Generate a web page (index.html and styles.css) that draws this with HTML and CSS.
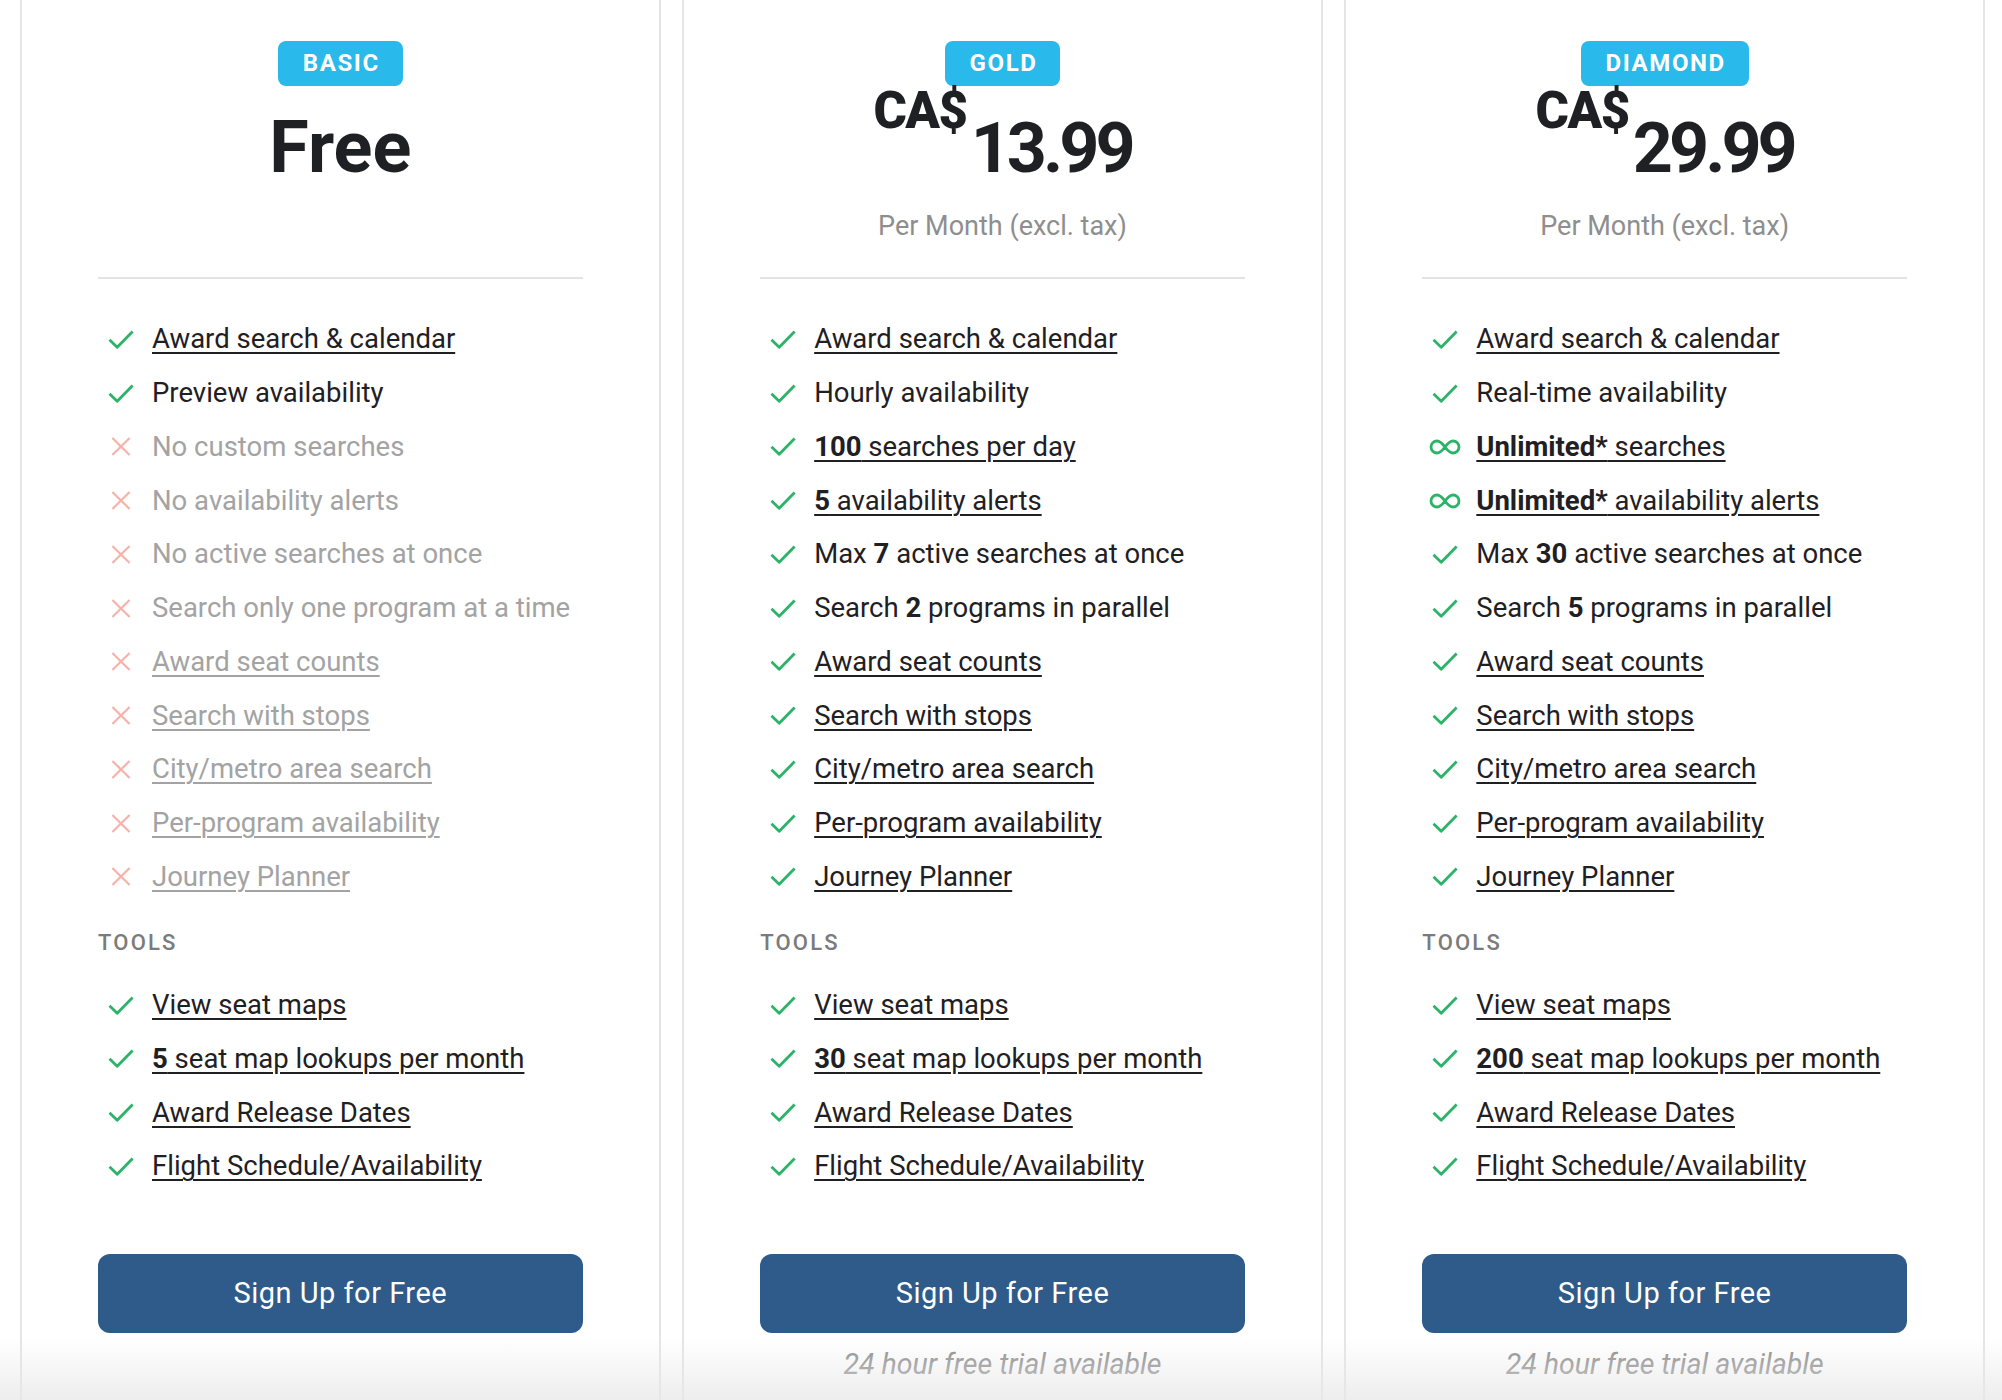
FILE: index.html
```html
<!DOCTYPE html>
<html lang="en">
<head>
<meta charset="utf-8">
<title>Plans</title>
<link rel="stylesheet" href="styles.css">
</head>
<body>
<svg class="defs" width="0" height="0" aria-hidden="true">
  <symbol id="i-check" viewBox="0 0 26 19"><path d="M1.5 9.8 L9.2 17.2 L24.6 1.6" fill="none" stroke="currentColor" stroke-width="2.8" stroke-linejoin="round"/></symbol>
  <symbol id="i-x" viewBox="0 0 22 22"><path d="M2 2 L20 20 M20 2 L2 20" fill="none" stroke="currentColor" stroke-width="2.3"/></symbol>
  <symbol id="i-inf" viewBox="0 0 32 16"><path d="M16 8 C13 4 10.5 2 8 2 A6 6 0 0 0 8 14 C10.5 14 13 12 16 8 C19 4 21.5 2 24 2 A6 6 0 0 1 24 14 C21.5 14 19 12 16 8 Z" fill="none" stroke="currentColor" stroke-width="2.8"/></symbol>
</svg>
<main class="plans">
  <section class="card">
    <div class="head">
      <span class="badge">BASIC</span>
      <div class="price"><span class="free">Free</span></div>
    </div>
    <hr class="divider">
    <ul class="features">
      <li class="yes"><svg class="ic ic-check"><use href="#i-check"/></svg><a href="#">Award search &amp; calendar</a></li>
      <li class="yes"><svg class="ic ic-check"><use href="#i-check"/></svg><span>Preview availability</span></li>
      <li class="no"><svg class="ic ic-x"><use href="#i-x"/></svg><span>No custom searches</span></li>
      <li class="no"><svg class="ic ic-x"><use href="#i-x"/></svg><span>No availability alerts</span></li>
      <li class="no"><svg class="ic ic-x"><use href="#i-x"/></svg><span>No active searches at once</span></li>
      <li class="no"><svg class="ic ic-x"><use href="#i-x"/></svg><span>Search only one program at a time</span></li>
      <li class="no"><svg class="ic ic-x"><use href="#i-x"/></svg><a href="#">Award seat counts</a></li>
      <li class="no"><svg class="ic ic-x"><use href="#i-x"/></svg><a href="#">Search with stops</a></li>
      <li class="no"><svg class="ic ic-x"><use href="#i-x"/></svg><a href="#">City/metro area search</a></li>
      <li class="no"><svg class="ic ic-x"><use href="#i-x"/></svg><a href="#">Per-program availability</a></li>
      <li class="no"><svg class="ic ic-x"><use href="#i-x"/></svg><a href="#">Journey Planner</a></li>
    </ul>
    <h4 class="group">TOOLS</h4>
    <ul class="features tools">
      <li class="yes"><svg class="ic ic-check"><use href="#i-check"/></svg><a href="#">View seat maps</a></li>
      <li class="yes"><svg class="ic ic-check"><use href="#i-check"/></svg><a href="#"><b>5</b> seat map lookups per month</a></li>
      <li class="yes"><svg class="ic ic-check"><use href="#i-check"/></svg><a href="#">Award Release Dates</a></li>
      <li class="yes"><svg class="ic ic-check"><use href="#i-check"/></svg><a href="#">Flight Schedule/Availability</a></li>
    </ul>
    <a class="btn" href="#">Sign Up for Free</a>
  </section>

  <section class="card">
    <div class="head">
      <span class="badge">GOLD</span>
      <div class="price"><span class="cur">CA$</span><span class="amt">13.99</span></div>
      <p class="period">Per Month (excl. tax)</p>
    </div>
    <hr class="divider">
    <ul class="features">
      <li class="yes"><svg class="ic ic-check"><use href="#i-check"/></svg><a href="#">Award search &amp; calendar</a></li>
      <li class="yes"><svg class="ic ic-check"><use href="#i-check"/></svg><span>Hourly availability</span></li>
      <li class="yes"><svg class="ic ic-check"><use href="#i-check"/></svg><a href="#"><b>100</b> searches per day</a></li>
      <li class="yes"><svg class="ic ic-check"><use href="#i-check"/></svg><a href="#"><b>5</b> availability alerts</a></li>
      <li class="yes"><svg class="ic ic-check"><use href="#i-check"/></svg><span>Max <b>7</b> active searches at once</span></li>
      <li class="yes"><svg class="ic ic-check"><use href="#i-check"/></svg><span>Search <b>2</b> programs in parallel</span></li>
      <li class="yes"><svg class="ic ic-check"><use href="#i-check"/></svg><a href="#">Award seat counts</a></li>
      <li class="yes"><svg class="ic ic-check"><use href="#i-check"/></svg><a href="#">Search with stops</a></li>
      <li class="yes"><svg class="ic ic-check"><use href="#i-check"/></svg><a href="#">City/metro area search</a></li>
      <li class="yes"><svg class="ic ic-check"><use href="#i-check"/></svg><a href="#">Per-program availability</a></li>
      <li class="yes"><svg class="ic ic-check"><use href="#i-check"/></svg><a href="#">Journey Planner</a></li>
    </ul>
    <h4 class="group">TOOLS</h4>
    <ul class="features tools">
      <li class="yes"><svg class="ic ic-check"><use href="#i-check"/></svg><a href="#">View seat maps</a></li>
      <li class="yes"><svg class="ic ic-check"><use href="#i-check"/></svg><a href="#"><b>30</b> seat map lookups per month</a></li>
      <li class="yes"><svg class="ic ic-check"><use href="#i-check"/></svg><a href="#">Award Release Dates</a></li>
      <li class="yes"><svg class="ic ic-check"><use href="#i-check"/></svg><a href="#">Flight Schedule/Availability</a></li>
    </ul>
    <a class="btn" href="#">Sign Up for Free</a>
    <p class="trial">24 hour free trial available</p>
  </section>

  <section class="card">
    <div class="head">
      <span class="badge">DIAMOND</span>
      <div class="price"><span class="cur">CA$</span><span class="amt">29.99</span></div>
      <p class="period">Per Month (excl. tax)</p>
    </div>
    <hr class="divider">
    <ul class="features">
      <li class="yes"><svg class="ic ic-check"><use href="#i-check"/></svg><a href="#">Award search &amp; calendar</a></li>
      <li class="yes"><svg class="ic ic-check"><use href="#i-check"/></svg><span>Real-time availability</span></li>
      <li class="yes"><svg class="ic ic-inf"><use href="#i-inf"/></svg><a href="#"><b>Unlimited*</b> searches</a></li>
      <li class="yes"><svg class="ic ic-inf"><use href="#i-inf"/></svg><a href="#"><b>Unlimited*</b> availability alerts</a></li>
      <li class="yes"><svg class="ic ic-check"><use href="#i-check"/></svg><span>Max <b>30</b> active searches at once</span></li>
      <li class="yes"><svg class="ic ic-check"><use href="#i-check"/></svg><span>Search <b>5</b> programs in parallel</span></li>
      <li class="yes"><svg class="ic ic-check"><use href="#i-check"/></svg><a href="#">Award seat counts</a></li>
      <li class="yes"><svg class="ic ic-check"><use href="#i-check"/></svg><a href="#">Search with stops</a></li>
      <li class="yes"><svg class="ic ic-check"><use href="#i-check"/></svg><a href="#">City/metro area search</a></li>
      <li class="yes"><svg class="ic ic-check"><use href="#i-check"/></svg><a href="#">Per-program availability</a></li>
      <li class="yes"><svg class="ic ic-check"><use href="#i-check"/></svg><a href="#">Journey Planner</a></li>
    </ul>
    <h4 class="group">TOOLS</h4>
    <ul class="features tools">
      <li class="yes"><svg class="ic ic-check"><use href="#i-check"/></svg><a href="#">View seat maps</a></li>
      <li class="yes"><svg class="ic ic-check"><use href="#i-check"/></svg><a href="#"><b>200</b> seat map lookups per month</a></li>
      <li class="yes"><svg class="ic ic-check"><use href="#i-check"/></svg><a href="#">Award Release Dates</a></li>
      <li class="yes"><svg class="ic ic-check"><use href="#i-check"/></svg><a href="#">Flight Schedule/Availability</a></li>
    </ul>
    <a class="btn" href="#">Sign Up for Free</a>
    <p class="trial">24 hour free trial available</p>
  </section>
</main>
<div class="fade" aria-hidden="true"></div>
</body>
</html>
```

FILE: styles.css
```css
* { box-sizing: border-box; }

html, body {
  margin: 0;
  padding: 0;
  background: #ffffff;
}

body {
  font-family: Roboto, "Liberation Sans", Arial, sans-serif;
  color: #1f2023;
  overflow: hidden;
  height: 1400px;
}

.defs { position: absolute; width: 0; height: 0; overflow: hidden; }

.plans {
  display: grid;
  grid-template-columns: repeat(3, 1fr);
  column-gap: 21.5px;
  padding: 0 17px 0 20px;
}

.card {
  border: 2px solid #e5e5e5;
  border-top: 0;
  padding: 41px 76px 60px;
  min-height: 1440px;
  display: flex;
  flex-direction: column;
}

.head {
  height: 236px;
  display: flex;
  flex-direction: column;
  align-items: center;
}

.badge {
  display: inline-block;
  background: #29b9ea;
  color: #ffffff;
  font-weight: 700;
  font-size: 24px;
  letter-spacing: 1.6px;
  line-height: 45px;
  height: 45px;
  padding: 0 23px 0 25px;
  border-radius: 8px;
}

.price {
  margin-top: 26px;
  display: flex;
  justify-content: center;
  align-items: flex-start;
  height: 72px;
  font-weight: 700;
}

.free {
  font-size: 72px;
  line-height: 72px;
}

.cur {
  font-size: 51px;
  line-height: 50px;
  margin-top: -26px;
  margin-right: 4px;
  letter-spacing: -1.5px;
  font-weight: 900;
}

.amt {
  font-size: 70px;
  line-height: 72px;
  letter-spacing: -4px;
}

.period {
  margin: 24px 0 0;
  font-size: 27px;
  line-height: 36px;
  color: #8e8e8e;
}

.divider {
  margin: 0;
  border: 0;
  border-top: 2px solid #e3e3e3;
  height: 0;
}

.features {
  list-style: none;
  margin: 33.5px 0 0;
  padding: 0;
}

.features li {
  display: flex;
  align-items: center;
  min-height: 53.75px;
  padding-left: 7px;
  font-size: 27.5px;
  line-height: 36px;
}

.features li a,
.features li span {
  color: inherit;
}

.features a {
  text-decoration: underline;
  text-decoration-thickness: 2px;
  text-underline-offset: 4px;
}

.features b { font-weight: 700; }

.ic {
  flex: none;
  margin-right: 15px;
}

.ic-check {
  width: 32px;
  height: 19px;
  color: #2bb468;
}

.ic-x {
  width: 32px;
  height: 21px;
  color: #f6b2a9;
}

.ic-inf {
  width: 32px;
  height: 16px;
  color: #2bb468;
}

.no { color: #a3a3a3; }

.group {
  margin: 25.5px 0 0;
  font-size: 22px;
  line-height: 28px;
  font-weight: 500;
  letter-spacing: 2.2px;
  color: #7b7b7b;
}

.tools { margin-top: 21px; }

.btn {
  margin-top: 60.5px;
  display: flex;
  align-items: center;
  justify-content: center;
  height: 79px;
  border-radius: 12px;
  background: #2e5b89;
  color: #ffffff;
  text-decoration: none;
  font-size: 29px;
  letter-spacing: 0.5px;
}

.trial {
  margin: 14px 0 0;
  text-align: center;
  font-style: italic;
  font-size: 28.5px;
  line-height: 36px;
  color: #8a8a8a;
}

.fade {
  position: fixed;
  left: 0;
  right: 0;
  bottom: 0;
  height: 64px;
  background: linear-gradient(to bottom, rgba(236, 236, 236, 0), rgba(232, 232, 232, 0.75));
  pointer-events: none;
}
```
